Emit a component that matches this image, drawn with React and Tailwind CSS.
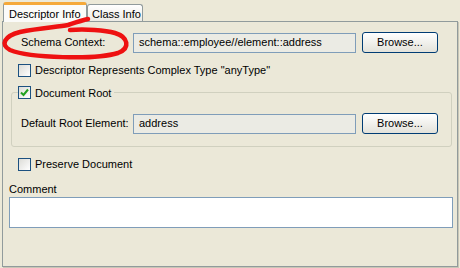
import React from "react";

const Checkbox = ({ checked }) => (
  <span className="w-[13px] h-[13px] border border-[#1c5180] bg-gradient-to-br from-[#dcdcd7] to-white flex items-center justify-center shrink-0">
    {checked && (
      <svg width="9" height="9" viewBox="0 0 9 9">
        <path d="M1 4.5 L3.5 7 L8 1.5" fill="none" stroke="#21a121" strokeWidth="2" />
      </svg>
    )}
  </span>
);

const Field = ({ value }) => (
  <div className="w-[223px] h-[20px] border border-[#7f9db9] bg-[#ebebe4] flex items-center pl-[5px]">
    {value}
  </div>
);

const BrowseButton = () => (
  <button className="w-[76px] h-[21px] ml-[6px] rounded-[3px] border border-[#003c74] bg-gradient-to-b from-white to-[#e3e2da] flex items-center justify-center">
    Browse...
  </button>
);

export default function App() {
  return (
    <div className="w-[460px] h-[268px] bg-[#ece9d8] relative font-['Liberation_Sans',sans-serif] text-[11px] text-black overflow-hidden">
      <div className="flex items-end h-[22px] pl-[3px] pt-[2px] relative z-10">
        <div className="w-[84px] h-[20px] bg-[#fbfbf9] border-x border-[#919b9c] border-t-[3px] border-t-[#f5a93a] rounded-t-[3px] pl-[5px] pt-[1px]">
          Descriptor Info
        </div>
        <div className="w-[56px] h-[17px] mb-[1px] bg-gradient-to-b from-white to-[#ecebe5] border border-b-0 border-[#919b9c] rounded-t-[3px] pl-[4px] pt-[1px]">
          Class Info
        </div>
      </div>
      <div className="absolute left-[2px] top-[21px] w-[456px] h-[246px] border border-[#919b9c] bg-[#ebe8d8] shadow-[1px_1px_0_#c9c6b6]">
        <div className="flex flex-col">
          <div className="flex items-center pl-[18px] mt-[10px]">
            <span className="w-[112px]">Schema Context:</span>
            <Field value="schema::employee//element::address" />
            <BrowseButton />
          </div>
          <div className="flex items-center gap-[4px] pl-[15px] mt-[9px]">
            <Checkbox />
            <span>Descriptor Represents Complex Type "anyType"</span>
          </div>
          <fieldset className="ml-[8px] w-[441px] mt-[6px] border border-[#d0d0bf] rounded-[3px] px-[6px] pb-[12px]">
            <legend className="flex items-center gap-[4px] pr-[3px]">
              <Checkbox checked />
              <span>Document Root</span>
            </legend>
            <div className="flex items-center pl-[3px] mt-[12px]">
              <span className="w-[112px]">Default Root Element:</span>
              <Field value="address" />
              <BrowseButton />
            </div>
          </fieldset>
          <div className="flex items-center gap-[4px] pl-[15px] mt-[9px]">
            <Checkbox />
            <span>Preserve Document</span>
          </div>
          <div className="pl-[6px] mt-[10px] leading-[13px]">Comment</div>
          <div className="ml-[6px] mt-[1px] w-[444px] h-[31px] border border-[#7f9db9] bg-white" />
        </div>
      </div>
      <svg className="absolute left-0 top-0 pointer-events-none z-20" width="460" height="268">
        <path
          d="M70 30 C85 29 105 30 115 33 C128 37 131 48 118 53 C95 60 30 58 10 50 C0 45 4 36 20 32 C40 28 58 27 68 25 C75 23 82 20 88 19"
          fill="none"
          stroke="#ee1111"
          strokeWidth="4.5"
          strokeLinecap="round"
        />
      </svg>
    </div>
  );
}
